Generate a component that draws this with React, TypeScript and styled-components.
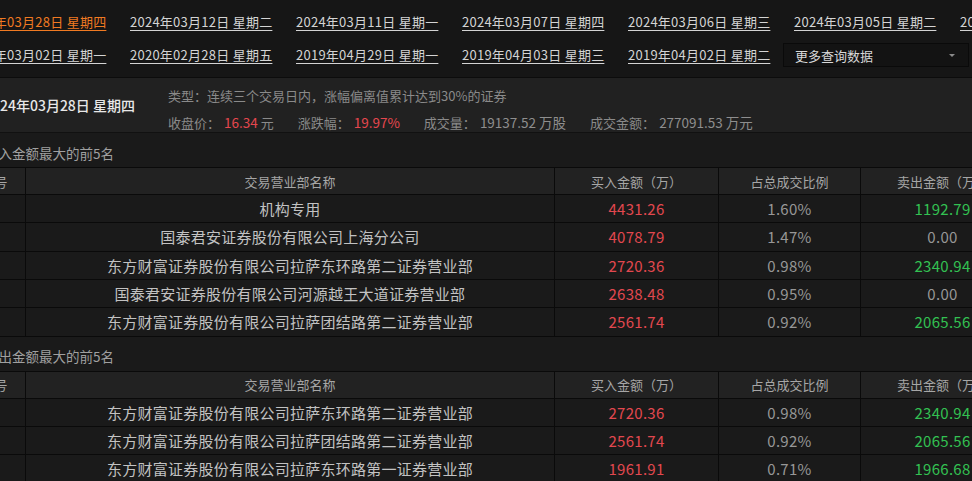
import React from "react";
import styled, { createGlobalStyle } from "styled-components";

const GlobalStyle = createGlobalStyle`
  html, body { margin: 0; padding: 0; background: #171717; }
  body {
    font-family: "Noto Sans CJK SC", "Noto Sans", "Microsoft YaHei", sans-serif;
    overflow: hidden;
  }
  * { box-sizing: border-box; }
`;

const Viewport = styled.div`
  width: 972px;
  height: 481px;
  overflow: hidden;
  background: #171717;
`;

const Page = styled.div`
  width: 1420px;
  margin-left: -36px;
`;

/* ---------- date links ---------- */
const LinkBar = styled.div`
  display: flex;
  flex-direction: column;
  gap: 9px;
  padding: 10px 0;
  border-bottom: 1px solid #0c0c0c;
  background: #161616;
`;

const LinkRow = styled.div`
  display: flex;
  align-items: center;
  gap: 22px;
  height: 24px;
`;

const LinkCell = styled.div`
  flex: none;
  width: 144px;
  font-size: 13px;
  line-height: 24px;
  letter-spacing: 0.25px;
  white-space: nowrap;
`;

const DateLink = styled.a<{ $active?: boolean }>`
  color: ${(p) => (p.$active ? "#f07a22" : "#d4d4d4")};
  text-decoration: underline;
  text-underline-offset: 3px;
  cursor: pointer;
`;

const Select = styled.div`
  flex: none;
  width: 186px;
  height: 24px;
  margin-left: -11px;
  display: flex;
  align-items: center;
  justify-content: space-between;
  padding: 0 11px 0 11px;
  background: #131313;
  border: 1px solid #0a0a0a;
  color: #d8d8d8;
  font-size: 13px;
`;

const Caret = styled.span`
  width: 0;
  height: 0;
  border-left: 3px solid transparent;
  border-right: 3px solid transparent;
  border-top: 3px solid #8a8a8a;
  margin-right: 2px;
`;

/* ---------- info bar ---------- */
const InfoBar = styled.div`
  display: flex;
  height: 55px;
  padding-left: 20px;
  background: #212121;
  border-bottom: 1px solid #111;
`;

const BigDate = styled.div`
  flex: none;
  width: 184px;
  align-self: center;
  font-size: 14px;
  font-weight: 500;
  color: #e8e8e8;
  white-space: nowrap;
`;

const InfoCol = styled.div`
  display: flex;
  flex-direction: column;
  gap: 6px;
  padding-top: 8px;
`;

const InfoLine = styled.div`
  display: flex;
  gap: 24px;
  font-size: 13px;
  line-height: 20px;
  color: #8a8a8a;
  white-space: nowrap;
`;

const InfoItem = styled.span``;

const InfoValue = styled.span<{ $red?: boolean }>`
  color: ${(p) => (p.$red ? "#e5474e" : "#8e8e8e")};
  margin-left: 4px;
  font-size: 13.5px;
`;

/* ---------- section ---------- */
const SectionTitle = styled.div`
  height: 34px;
  padding: 5px 0 0 21px;
  display: flex;
  align-items: center;
  font-size: 13.5px;
  color: #a0a0a0;
  background: #1a1a1a;
`;

const COLS = "62px 529px 164px 142px 164px 142px 164px";

const HeadRow = styled.div`
  display: grid;
  grid-template-columns: ${COLS};
  height: 28px;
  background: #222222;
  border-top: 1px solid #0a0a0a;
  border-bottom: 1px solid #0a0a0a;
`;

const Row = styled.div`
  display: grid;
  grid-template-columns: ${COLS};
  height: 28.333px;
  background: #1a1a1a;
  border-bottom: 1px solid #0a0a0a;
`;

const HeadCell = styled.div`
  display: flex;
  align-items: center;
  justify-content: center;
  border-right: 1px solid #0a0a0a;
  font-size: 13px;
  color: #a6a6a6;
  white-space: nowrap;
`;

type Tone = "name" | "red" | "green" | "grey";
const toneColor: Record<Tone, string> = {
  name: "#c2c2c2",
  red: "#e2484f",
  green: "#33c152",
  grey: "#979797",
};

const Cell = styled.div<{ $tone: Tone }>`
  display: flex;
  align-items: center;
  justify-content: center;
  border-right: 1px solid #0a0a0a;
  font-size: 15px;
  letter-spacing: ${(p) => (p.$tone === "name" ? "0.25px" : "0.3px")};
  color: ${(p) => toneColor[p.$tone]};
  white-space: nowrap;
`;

type Rec = { name: string; buy: string; ratio: string; sell: string; sratio: string; net: string };

const buyTop: Rec[] = [
  { name: "机构专用", buy: "4431.26", ratio: "1.60%", sell: "1192.79", sratio: "0.43%", net: "3238.47" },
  { name: "国泰君安证券股份有限公司上海分公司", buy: "4078.79", ratio: "1.47%", sell: "0.00", sratio: "0.00%", net: "4078.79" },
  { name: "东方财富证券股份有限公司拉萨东环路第二证券营业部", buy: "2720.36", ratio: "0.98%", sell: "2340.94", sratio: "0.84%", net: "379.42" },
  { name: "国泰君安证券股份有限公司河源越王大道证券营业部", buy: "2638.48", ratio: "0.95%", sell: "0.00", sratio: "0.00%", net: "2638.48" },
  { name: "东方财富证券股份有限公司拉萨团结路第二证券营业部", buy: "2561.74", ratio: "0.92%", sell: "2065.56", sratio: "0.75%", net: "496.18" },
];

const sellTop: Rec[] = [
  { name: "东方财富证券股份有限公司拉萨东环路第二证券营业部", buy: "2720.36", ratio: "0.98%", sell: "2340.94", sratio: "0.84%", net: "379.42" },
  { name: "东方财富证券股份有限公司拉萨团结路第二证券营业部", buy: "2561.74", ratio: "0.92%", sell: "2065.56", sratio: "0.75%", net: "496.18" },
  { name: "东方财富证券股份有限公司拉萨东环路第一证券营业部", buy: "1961.91", ratio: "0.71%", sell: "1966.68", sratio: "0.71%", net: "-4.77" },
];

const heads = ["序号", "交易营业部名称", "买入金额（万）", "占总成交比例", "卖出金额（万）", "占总成交比例", "净额（万）"];

const DataTable: React.FC<{ rows: Rec[] }> = ({ rows }) => (
  <div>
    <HeadRow>
      {heads.map((h, i) => (
        <HeadCell key={i}>{h}</HeadCell>
      ))}
    </HeadRow>
    {rows.map((r, i) => (
      <Row key={i}>
        <Cell $tone="grey">{i + 1}</Cell>
        <Cell $tone="name">{r.name}</Cell>
        <Cell $tone="red">{r.buy}</Cell>
        <Cell $tone="grey">{r.ratio}</Cell>
        <Cell $tone={r.sell === "0.00" ? "grey" : "green"}>{r.sell}</Cell>
        <Cell $tone="grey">{r.sratio}</Cell>
        <Cell $tone={r.net.startsWith("-") ? "green" : "red"}>{r.net}</Cell>
      </Row>
    ))}
  </div>
);

const row1 = [
  "2024年03月28日 星期四",
  "2024年03月12日 星期二",
  "2024年03月11日 星期一",
  "2024年03月07日 星期四",
  "2024年03月06日 星期三",
  "2024年03月05日 星期二",
  "2024年03月04日 星期一",
];
const row2 = [
  "2020年03月02日 星期一",
  "2020年02月28日 星期五",
  "2019年04月29日 星期一",
  "2019年04月03日 星期三",
  "2019年04月02日 星期二",
];

export default function App() {
  return (
    <Viewport>
      <GlobalStyle />
      <Page>
        <LinkBar>
          <LinkRow>
            {row1.map((d, i) => (
              <LinkCell key={d}>
                <DateLink $active={i === 0}>{d}</DateLink>
              </LinkCell>
            ))}
          </LinkRow>
          <LinkRow>
            {row2.map((d) => (
              <LinkCell key={d}>
                <DateLink>{d}</DateLink>
              </LinkCell>
            ))}
            <Select>
              <span>更多查询数据</span>
              <Caret />
            </Select>
          </LinkRow>
        </LinkBar>

        <InfoBar>
          <BigDate>2024年03月28日 星期四</BigDate>
          <InfoCol>
            <InfoLine>
              <InfoItem>类型：连续三个交易日内，涨幅偏离值累计达到30%的证券</InfoItem>
            </InfoLine>
            <InfoLine>
              <InfoItem>
                收盘价：<InfoValue $red>16.34</InfoValue> 元
              </InfoItem>
              <InfoItem>
                涨跌幅：<InfoValue $red>19.97%</InfoValue>
              </InfoItem>
              <InfoItem>
                成交量：<InfoValue>19137.52 万股</InfoValue>
              </InfoItem>
              <InfoItem>
                成交金额：<InfoValue>277091.53 万元</InfoValue>
              </InfoItem>
            </InfoLine>
          </InfoCol>
        </InfoBar>

        <SectionTitle>买入金额最大的前5名</SectionTitle>
        <DataTable rows={buyTop} />
        <SectionTitle>卖出金额最大的前5名</SectionTitle>
        <DataTable rows={sellTop} />
      </Page>
    </Viewport>
  );
}
